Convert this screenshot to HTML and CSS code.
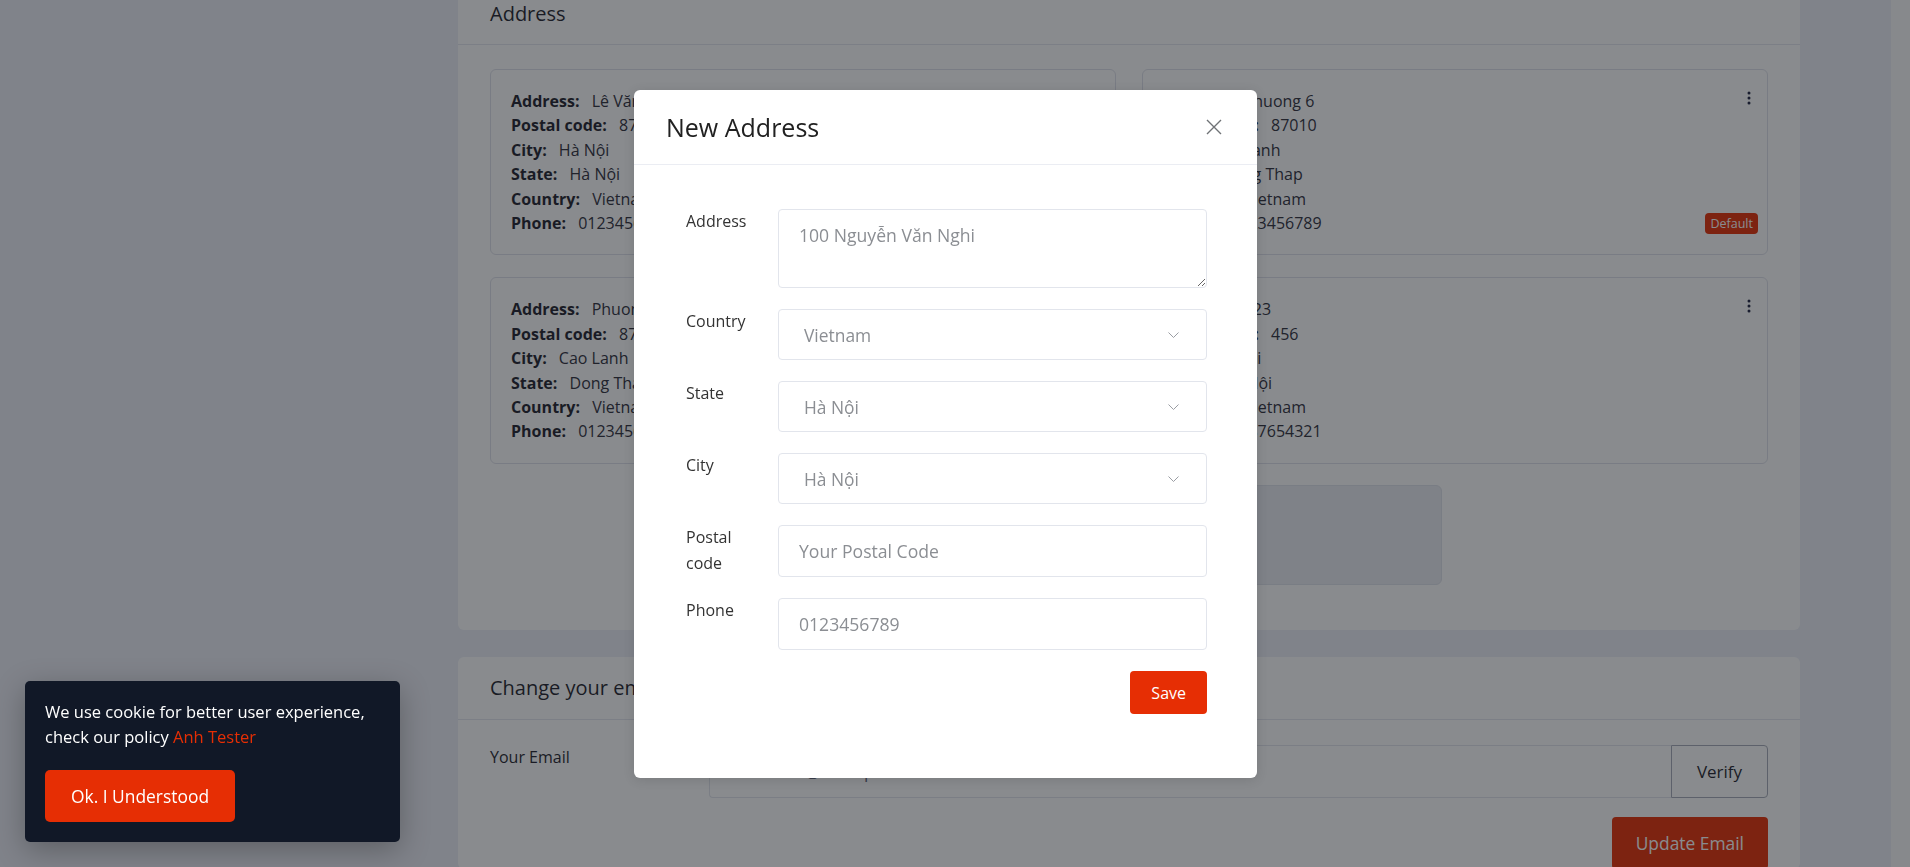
FILE: index.html
```html
<!DOCTYPE html>
<html lang="vi">
<head>
<meta charset="utf-8">
<title>Address</title>
<link rel="stylesheet" href="styles.css">
</head>
<body>
<div class="page">
  <div class="side"></div>
  <main class="content">
    <section class="card">
      <div class="card-header"><h5 class="card-title">Address</h5></div>
      <div class="addr-body">
        <div class="addr-grid">
          <div class="addr-item">
            <div class="addr-line"><span class="k">Address:</span> <span class="v">Lê Văn Sỹ</span></div>
            <div class="addr-line"><span class="k">Postal code:</span> <span class="v">87010</span></div>
            <div class="addr-line"><span class="k">City:</span> <span class="v">Hà Nội</span></div>
            <div class="addr-line"><span class="k">State:</span> <span class="v">Hà Nội</span></div>
            <div class="addr-line"><span class="k">Country:</span> <span class="v">Vietnam</span></div>
            <div class="addr-line"><span class="k">Phone:</span> <span class="v">0123456789</span></div>
            <svg class="dots" viewBox="0 0 4 14" width="4" height="14"><circle cx="2" cy="2" r="1.5"/><circle cx="2" cy="7" r="1.5"/><circle cx="2" cy="12" r="1.5"/></svg>
          </div>
          <div class="addr-item">
            <div class="addr-line"><span class="k">Address:</span> <span class="v">Phuong 6</span></div>
            <div class="addr-line"><span class="k">Postal code:</span> <span class="v">87010</span></div>
            <div class="addr-line"><span class="k">City:</span> <span class="v">Cao Lanh</span></div>
            <div class="addr-line"><span class="k">State:</span> <span class="v">Dong Thap</span></div>
            <div class="addr-line"><span class="k">Country:</span> <span class="v">Vietnam</span></div>
            <div class="addr-line"><span class="k">Phone:</span> <span class="v">0123456789</span></div>
            <svg class="dots" viewBox="0 0 4 14" width="4" height="14"><circle cx="2" cy="2" r="1.5"/><circle cx="2" cy="7" r="1.5"/><circle cx="2" cy="12" r="1.5"/></svg>
            <span class="badge">Default</span>
          </div>
          <div class="addr-item">
            <div class="addr-line"><span class="k">Address:</span> <span class="v">Phuong 6</span></div>
            <div class="addr-line"><span class="k">Postal code:</span> <span class="v">87010</span></div>
            <div class="addr-line"><span class="k">City:</span> <span class="v">Cao Lanh</span></div>
            <div class="addr-line"><span class="k">State:</span> <span class="v">Dong Thap</span></div>
            <div class="addr-line"><span class="k">Country:</span> <span class="v">Vietnam</span></div>
            <div class="addr-line"><span class="k">Phone:</span> <span class="v">0123456789</span></div>
          </div>
          <div class="addr-item">
            <div class="addr-line"><span class="k">Address:</span> <span class="v">123</span></div>
            <div class="addr-line"><span class="k">Postal code:</span> <span class="v">456</span></div>
            <div class="addr-line"><span class="k">City:</span> <span class="v">Hà Nội</span></div>
            <div class="addr-line"><span class="k">State:</span> <span class="v">Hà Nội</span></div>
            <div class="addr-line"><span class="k">Country:</span> <span class="v">Vietnam</span></div>
            <div class="addr-line"><span class="k">Phone:</span> <span class="v">0987654321</span></div>
            <svg class="dots" viewBox="0 0 4 14" width="4" height="14"><circle cx="2" cy="2" r="1.5"/><circle cx="2" cy="7" r="1.5"/><circle cx="2" cy="12" r="1.5"/></svg>
          </div>
        </div>
        <div class="add-box"></div>
      </div>
    </section>

    <section class="card email-card">
      <div class="card-header"><h5 class="card-title">Change your email</h5></div>
      <div class="email-body">
        <label class="email-label">Your Email</label>
        <div class="input-group">
          <input class="email-input" type="email" value="customer@example.com">
          <button class="btn-verify" type="button">Verify</button>
        </div>
        <div></div>
        <div class="email-actions"><button class="btn-red btn-update" type="button">Update Email</button></div>
      </div>
    </section>
  </main>
  <div class="gutter"></div>
  <div class="track"></div>
</div>

<div class="backdrop"></div>

<div class="modal-wrap">
  <div class="modal">
    <div class="modal-header">
      <h5 class="modal-title">New Address</h5>
      <svg class="close" viewBox="0 0 16 16" width="16" height="16"><path d="M1 1 L15 15 M15 1 L1 15"/></svg>
    </div>
    <form class="modal-body">
      <div class="frow">
        <label class="flabel">Address</label>
        <textarea class="ftext" placeholder="100 Nguyễn Văn Nghi"></textarea>
      </div>
      <div class="frow">
        <label class="flabel">Country</label>
        <div class="fselect"><span>Vietnam</span><svg class="chev" viewBox="0 0 11 6" width="11" height="6"><path d="M0.5 0.5 L5.5 5.5 L10.5 0.5"/></svg></div>
      </div>
      <div class="frow">
        <label class="flabel">State</label>
        <div class="fselect"><span>Hà Nội</span><svg class="chev" viewBox="0 0 11 6" width="11" height="6"><path d="M0.5 0.5 L5.5 5.5 L10.5 0.5"/></svg></div>
      </div>
      <div class="frow">
        <label class="flabel">City</label>
        <div class="fselect"><span>Hà Nội</span><svg class="chev" viewBox="0 0 11 6" width="11" height="6"><path d="M0.5 0.5 L5.5 5.5 L10.5 0.5"/></svg></div>
      </div>
      <div class="frow">
        <label class="flabel">Postal code</label>
        <input class="finput" type="text" placeholder="Your Postal Code">
      </div>
      <div class="frow">
        <label class="flabel">Phone</label>
        <input class="finput" type="text" placeholder="0123456789">
      </div>
      <div class="factions"><button class="btn-red btn-save" type="button">Save</button></div>
    </form>
  </div>
</div>

<div class="cookie">
  <p class="cookie-text">We use cookie for better user experience, check our policy <a href="#">Anh Tester</a></p>
  <button class="btn-red btn-cookie" type="button">Ok. I Understood</button>
</div>
</body>
</html>
```

FILE: styles.css
```css
* { box-sizing: border-box; }
html, body { margin: 0; height: 100%; overflow: hidden; }
body {
  font-family: "Open Sans", "Noto Sans", sans-serif;
  background: #eceff7;
  color: #333;
}

.page { display: flex; height: 867px; }
.side { flex: 0 0 458px; }
.content { flex: 0 0 1342px; margin-top: -18px; }
.gutter { flex: 1; }
.track { flex: 0 0 19px; background: #fafafb; }

.card { background: #fff; border-radius: 6px; }
.card-header {
  height: 63px;
  border-bottom: 1px solid #e4e6ef;
  padding: 0 32px;
  display: flex;
  align-items: center;
}
.card-title { margin: 0; font-size: 20px; font-weight: 400; color: #1f1f2c; }

.addr-body { padding: 24px 32px 45px; }
.addr-grid {
  display: grid;
  grid-template-columns: 1fr 1fr;
  column-gap: 26px;
  row-gap: 22px;
}
.addr-item {
  position: relative;
  border: 1px solid #dfe1ea;
  border-radius: 6px;
  padding: 19px 20px;
  font-size: 16px;
  line-height: 24.4px;
  color: #2e2e3a;
}
.addr-line .k { font-weight: 700; color: #1f1f2c; margin-right: 8px; }
.dots { position: absolute; top: 21px; right: 16px; fill: #1f2340; }
.badge {
  position: absolute;
  right: 9px;
  bottom: 20px;
  height: 21px;
  padding: 0 5px;
  background: #e62e04;
  color: #fff;
  font-size: 12.5px;
  line-height: 21px;
  border-radius: 4px;
}
.add-box {
  width: calc(50% - 13px);
  height: 100px;
  margin: 21px auto 0;
  background: #eaecf2;
  border: 1px solid #dfe2ea;
  border-radius: 6px;
}

.email-card { margin-top: 27px; }
.email-body {
  padding: 25px 32px 0;
  display: grid;
  grid-template-columns: 219px 1fr;
  row-gap: 19px;
}
.email-label { font-size: 16px; line-height: 25.6px; color: #1f1f2c; }
.input-group { display: flex; height: 53px; }
.email-input {
  flex: 1;
  border: 1px solid #e2e5ec;
  border-right: 0;
  border-radius: 4px 0 0 4px;
  padding: 0 20px;
  font: 17px "Open Sans", sans-serif;
  color: #5e6278;
}
.btn-verify {
  width: 97px;
  border: 1px solid #a6abb8;
  background: #fff;
  border-radius: 0 4px 4px 0;
  font: 17px "Open Sans", sans-serif;
  color: #1f1f2c;
}
.email-actions { display: flex; justify-content: flex-end; }

.btn-red {
  background: #e62e04;
  color: #fff;
  border: 0;
  border-radius: 4px;
  font-family: "Open Sans", sans-serif;
}
.btn-update { height: 52px; padding: 0 24px; font-size: 17.4px; }

.backdrop {
  position: fixed;
  inset: 0;
  background: rgba(20, 23, 30, 0.5);
  z-index: 1;
}

.modal-wrap {
  position: fixed;
  top: 0;
  left: 0;
  width: 1891px;
  display: flex;
  justify-content: center;
  padding-top: 90px;
  z-index: 2;
}
.modal {
  width: 623px;
  background: #fff;
  border-radius: 6px;
  box-shadow: 0 2px 12px rgba(0, 0, 0, 0.12);
}
.modal-header {
  height: 75px;
  border-bottom: 1px solid #ebedf3;
  display: flex;
  align-items: center;
  justify-content: space-between;
  padding: 0 35px 0 32px;
}
.modal-title { margin: 0; font-size: 25px; font-weight: 400; color: #212121; }
.close { stroke: #6f7276; stroke-width: 1.4; fill: none; }

.modal-body { padding: 44px 50px 64px 52px; }
.frow {
  display: grid;
  grid-template-columns: 92px 1fr;
  margin-bottom: 21px;
}
.flabel { font-size: 16px; line-height: 25.6px; color: #333; padding-right: 12px; }
.ftext {
  height: 79px;
  border: 1px solid #e2e5ec;
  border-radius: 4px;
  padding: 13px 20px;
  font: 17.6px/25.6px "Open Sans", sans-serif;
  resize: vertical;
  color: #333;
  outline: none;
}
.ftext::placeholder, .finput::placeholder { color: #8b8e93; }
.fselect {
  height: 51px;
  border: 1px solid #e2e5ec;
  border-radius: 4px;
  padding: 0 27px 0 20px;
  display: flex;
  align-items: center;
  justify-content: space-between;
  font-size: 17.4px;
  color: #8b8e93;
}
.fselect span { padding-left: 5px; }
.chev { stroke: #9a9da3; stroke-width: 1; fill: none; }
.finput {
  height: 52px;
  border: 1px solid #e2e5ec;
  border-radius: 4px;
  padding: 0 20px;
  font: 17.6px "Open Sans", sans-serif;
  color: #333;
  outline: none;
}
.factions { display: flex; justify-content: flex-end; }
.btn-save { height: 43px; padding: 0 21px; font-size: 16px; }

.cookie {
  position: fixed;
  left: 25px;
  bottom: 25px;
  width: 375px;
  background: #111827;
  border-radius: 5px;
  padding: 19px 20px 20px;
  color: #fff;
  box-shadow: 0 8px 30px rgba(0, 0, 0, 0.28);
  z-index: 3;
}
.cookie-text { margin: 0 0 21px; font-size: 16.5px; line-height: 24.4px; }
.cookie-text a { color: #e62e04; text-decoration: none; }
.btn-cookie { height: 52px; padding: 0 26px; font-size: 17.4px; border-radius: 5px; }
```
